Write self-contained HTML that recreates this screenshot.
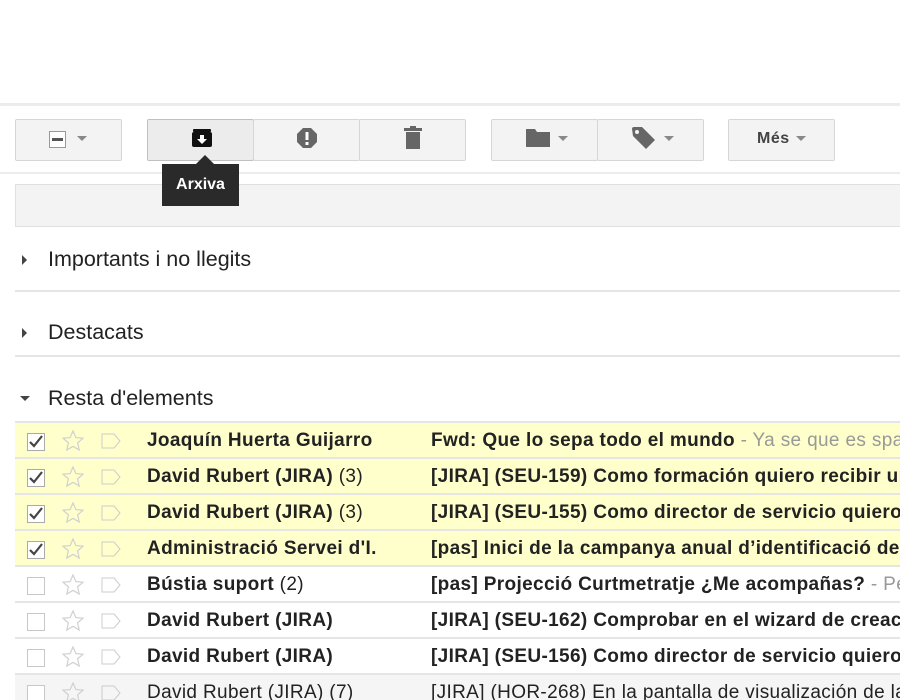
<!DOCTYPE html>
<html><head><meta charset="utf-8"><style>
*{margin:0;padding:0;box-sizing:border-box}
html,body{width:900px;height:700px;overflow:hidden}
body{background:#fff;font-family:"Liberation Sans",Arial,sans-serif;position:relative;color:#222}
.a{position:absolute}
.btn{position:absolute;top:119px;height:42px;background:#f3f3f3;border:1px solid #d6d6d6;border-radius:2px}
.dd{position:absolute;width:0;height:0;border-left:5px solid transparent;border-right:5px solid transparent;border-top:5px solid #888}
.sec{position:absolute;left:48px;font-size:21.5px;color:#222}
.tri{position:absolute;left:22px}
.row{position:absolute;left:15px;width:885px;height:36px;border-bottom:2px solid #e5e5e5;font-size:19px;letter-spacing:0.35px;white-space:nowrap;overflow:hidden}
.row.y{background:#ffffcc}
.row .cb{position:absolute;left:12px;top:10px}
.row .st{position:absolute;left:47px;top:7px}
.row .lb{position:absolute;left:86px;top:10px}
.row .n{position:absolute;left:132px;top:7px;font-weight:bold}
.row .n span{font-weight:normal}
.row .s{position:absolute;left:416px;top:7px;font-weight:bold}
.row .s span{font-weight:normal;color:#999}
</style></head><body>
<svg width="0" height="0" style="position:absolute"><defs>
<g id="ck"><rect x="0.5" y="0.5" width="17" height="17" fill="#fff" stroke="#aaa"/><path d="M3 9l4 4 8-10" fill="none" stroke="#444" stroke-width="2.2"/></g>
<g id="uk"><rect x="0.5" y="0.5" width="17" height="17" fill="#fff" stroke="#c8c8c8"/></g>
<g id="st"><path d="M11 1l2.9 6.6 7.1.6-5.4 4.7 1.6 7.1L11 16.3 4.8 20l1.6-7.1L1 8.2l7.1-.6z" fill="none" stroke="#d0d0d0" stroke-width="1.2"/></g>
<g id="lb"><path d="M1 1h12l6 7-6 7H1z" fill="none" stroke="#ccc"/></g>
</defs></svg>
<div class="a" style="left:0;top:103px;width:900px;height:3px;background:#ececec"></div>
<div class="btn" style="left:15px;width:107px"></div>
<div class="a" style="left:49px;top:131px;width:17px;height:17px;border:1px solid #999;background:#fff"><div style="margin:6px 2px 0;height:3px;background:#555"></div></div>
<div class="dd" style="left:77px;top:136px"></div>
<div class="btn" style="left:147px;width:107px;border-color:#c0c0c0;background:#ececec"></div>
<div class="btn" style="left:253px;width:107px"></div>
<div class="btn" style="left:359px;width:107px"></div>
<svg class="a" style="left:191px;top:128px" width="22" height="20" viewBox="0 0 22 20"><rect x="2" y="1" width="18" height="3" rx="1" fill="#111"/><rect x="1" y="4" width="20" height="15" rx="2" fill="#111"/><path d="M9 7h4v4h3l-5 5-5-5h3z" fill="#fff"/></svg>
<svg class="a" style="left:296px;top:127px" width="22" height="22" viewBox="0 0 22 22"><path d="M7 1h8l6 6v8l-6 6H7l-6-6V7z" fill="#666"/><rect x="9.5" y="5" width="3" height="8" fill="#fff"/><rect x="9.5" y="15" width="3" height="3" fill="#fff"/></svg>
<svg class="a" style="left:403px;top:126px" width="20" height="24" viewBox="0 0 20 24"><rect x="1" y="2" width="18" height="3" fill="#666"/><rect x="7" y="0" width="6" height="3" fill="#666"/><rect x="3" y="6" width="14" height="17" fill="#666"/></svg>
<div class="btn" style="left:491px;width:107px"></div>
<div class="btn" style="left:597px;width:107px"></div>
<svg class="a" style="left:526px;top:128px" width="26" height="20" viewBox="0 0 26 20"><path d="M0 1h9l2 3h13v15H0z" fill="#666"/></svg>
<div class="dd" style="left:558px;top:136px"></div>
<svg class="a" style="left:631px;top:126px" width="26" height="24" viewBox="0 0 26 24"><path d="M1 3a2 2 0 0 1 2-2h8l13 13-9 9L2 10z" fill="#666"/><circle cx="6" cy="6" r="2" fill="#f3f3f3"/></svg>
<div class="dd" style="left:664px;top:136px"></div>
<div class="btn" style="left:728px;width:107px"></div>
<div class="a" style="left:757px;top:130px;font-size:16px;font-weight:bold;color:#444;letter-spacing:0.5px">Més</div>
<div class="dd" style="left:796px;top:136px"></div>
<div class="a" style="left:0;top:172px;width:900px;height:2px;background:#ececec"></div>
<div class="a" style="left:15px;top:184px;width:890px;height:43px;background:#f3f3f3;border:1px solid #e0e0e0"></div>
<div class="a" style="left:195px;top:155px;width:0;height:0;border-left:10px solid transparent;border-right:10px solid transparent;border-bottom:10px solid #2a2a2a"></div>
<div class="a" style="left:162px;top:164px;width:77px;height:42px;background:#2a2a2a;color:#fff;font-size:16px;font-weight:bold;text-align:center;line-height:42px">Arxiva</div>
<div class="tri" style="top:255px;border-top:5px solid transparent;border-bottom:5px solid transparent;border-left:5px solid #444"></div>
<div class="sec" style="top:247px">Importants i no llegits</div>
<div class="a" style="left:15px;top:290px;width:885px;height:2px;background:#e5e5e5"></div>
<div class="tri" style="top:328px;border-top:5px solid transparent;border-bottom:5px solid transparent;border-left:5px solid #444"></div>
<div class="sec" style="top:320px">Destacats</div>
<div class="a" style="left:15px;top:355px;width:885px;height:2px;background:#e5e5e5"></div>
<div class="tri" style="top:396px;left:20px;border-left:5px solid transparent;border-right:5px solid transparent;border-top:5px solid #444"></div>
<div class="sec" style="top:386px">Resta d'elements</div>
<div class="a" style="left:15px;top:421px;width:885px;height:2px;background:#e5e5e5"></div>

<div class="row y" style="top:423px"><svg class="cb" width="18" height="18"><use href="#ck"/></svg><svg class="st" width="22" height="22"><use href="#st"/></svg><svg class="lb" width="20" height="16"><use href="#lb"/></svg><div class="n">Joaquín Huerta Guijarro</div><div class="s">Fwd: Que lo sepa todo el mundo <span>- Ya se que es spam pero</span></div></div>
<div class="row y" style="top:459px"><svg class="cb" width="18" height="18"><use href="#ck"/></svg><svg class="st" width="22" height="22"><use href="#st"/></svg><svg class="lb" width="20" height="16"><use href="#lb"/></svg><div class="n">David Rubert (JIRA) <span>(3)</span></div><div class="s">[JIRA] (SEU-159) Como formación quiero recibir una</div></div>
<div class="row y" style="top:495px"><svg class="cb" width="18" height="18"><use href="#ck"/></svg><svg class="st" width="22" height="22"><use href="#st"/></svg><svg class="lb" width="20" height="16"><use href="#lb"/></svg><div class="n">David Rubert (JIRA) <span>(3)</span></div><div class="s">[JIRA] (SEU-155) Como director de servicio quiero poder</div></div>
<div class="row y" style="top:531px"><svg class="cb" width="18" height="18"><use href="#ck"/></svg><svg class="st" width="22" height="22"><use href="#st"/></svg><svg class="lb" width="20" height="16"><use href="#lb"/></svg><div class="n">Administració Servei d'I.</div><div class="s">[pas] Inici de la campanya anual d’identificació de</div></div>
<div class="row" style="top:567px"><svg class="cb" width="18" height="18"><use href="#uk"/></svg><svg class="st" width="22" height="22"><use href="#st"/></svg><svg class="lb" width="20" height="16"><use href="#lb"/></svg><div class="n">Bústia suport <span>(2)</span></div><div class="s">[pas] Projecció Curtmetratje ¿Me acompañas? <span>- Per</span></div></div>
<div class="row" style="top:603px"><svg class="cb" width="18" height="18"><use href="#uk"/></svg><svg class="st" width="22" height="22"><use href="#st"/></svg><svg class="lb" width="20" height="16"><use href="#lb"/></svg><div class="n">David Rubert (JIRA)</div><div class="s">[JIRA] (SEU-162) Comprobar en el wizard de creación</div></div>
<div class="row" style="top:639px"><svg class="cb" width="18" height="18"><use href="#uk"/></svg><svg class="st" width="22" height="22"><use href="#st"/></svg><svg class="lb" width="20" height="16"><use href="#lb"/></svg><div class="n">David Rubert (JIRA)</div><div class="s">[JIRA] (SEU-156) Como director de servicio quiero poder</div></div>
<div class="row" style="top:675px;background:#f5f5f5"><svg class="cb" width="18" height="18"><use href="#uk"/></svg><svg class="st" width="22" height="22"><use href="#st"/></svg><svg class="lb" width="20" height="16"><use href="#lb"/></svg><div class="n" style="font-weight:normal">David Rubert (JIRA) (7)</div><div class="s" style="font-weight:normal">[JIRA] (HOR-268) En la pantalla de visualización de la</div></div>
</body></html>
